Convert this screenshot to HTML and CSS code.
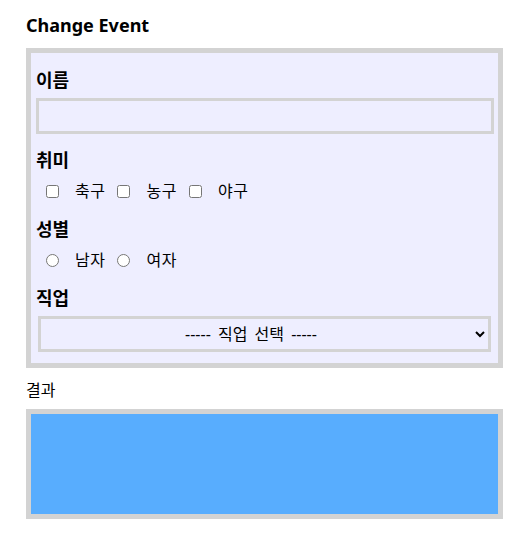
FILE: index.html
```html
<!DOCTYPE html>
<html lang="ko">
<head>
<meta charset="utf-8">
<title>Change Event</title>
<link rel="stylesheet" href="styles.css">
</head>
<body>
<h1 class="title">Change Event</h1>
<div class="form-box">
  <div class="label">이름</div>
  <input class="text-input" type="text">
  <div class="label label-gap">취미</div>
  <div class="options">
    <input type="checkbox" class="opt first"><span class="opt-text">축구</span>
    <input type="checkbox" class="opt"><span class="opt-text">농구</span>
    <input type="checkbox" class="opt"><span class="opt-text">야구</span>
  </div>
  <div class="label label-gap2">성별</div>
  <div class="options">
    <input type="radio" name="g" class="opt first"><span class="opt-text">남자</span>
    <input type="radio" name="g" class="opt"><span class="opt-text">여자</span>
  </div>
  <div class="label label-gap2">직업</div>
  <select class="job">
    <option>----- 직업 선택 -----</option>
  </select>
</div>
<div class="result-label">결과</div>
<div class="result"></div>
</body>
</html>
```

FILE: styles.css
```css
body {
  margin: 0;
  padding: 13px 0 0 26px;
  font-family: "Noto Sans", "Noto Sans CJK KR", sans-serif;
  color: #000;
  background: #fff;
}

.title {
  margin: 0 0 11px;
  font-size: 18px;
  line-height: 24px;
  font-weight: 700;
}

.form-box {
  width: 477px;
  box-sizing: border-box;
  border: 5px solid #d3d3d3;
  background: #eeeeff;
  padding: 15px 4px 11px 5px;
}

.label {
  font-size: 18px;
  line-height: 24px;
  font-weight: 700;
}

.label-gap {
  margin-top: 14px;
}

.label-gap2 {
  margin-top: 16px;
}

.text-input {
  display: block;
  width: 458px;
  height: 36px;
  box-sizing: border-box;
  margin: 6px 0 0;
  padding: 0 4px;
  border: 3px solid #d3d3d3;
  background: #eeeeff;
  outline: none;
  font: inherit;
}

.options {
  display: flex;
  align-items: center;
  height: 20px;
  margin-top: 9px;
  font-size: 16px;
  line-height: 20px;
}

.opt {
  width: 13px;
  height: 13px;
  margin: 0 0 0 12px;
}

.opt.first {
  margin-left: 10px;
}

.opt-text {
  margin-left: 16px;
  letter-spacing: 0.5px;
}

.job {
  display: block;
  width: 453px;
  height: 36px;
  box-sizing: border-box;
  margin: 6px 0 0 2px;
  padding: 0 15px 0 0;
  border: 3px solid #d3d3d3;
  background-color: #eeeeff;
  font-family: inherit;
  font-size: 16px;
  word-spacing: 3px;
  color: #000;
  text-align: center;
  text-align-last: center;
  outline: none;
}

.result-label {
  margin-top: 12px;
  font-size: 16px;
  line-height: 20px;
}

.result {
  width: 477px;
  height: 110px;
  box-sizing: border-box;
  margin-top: 9px;
  border: 5px solid #d3d3d3;
  background: #58adfe;
}
```
